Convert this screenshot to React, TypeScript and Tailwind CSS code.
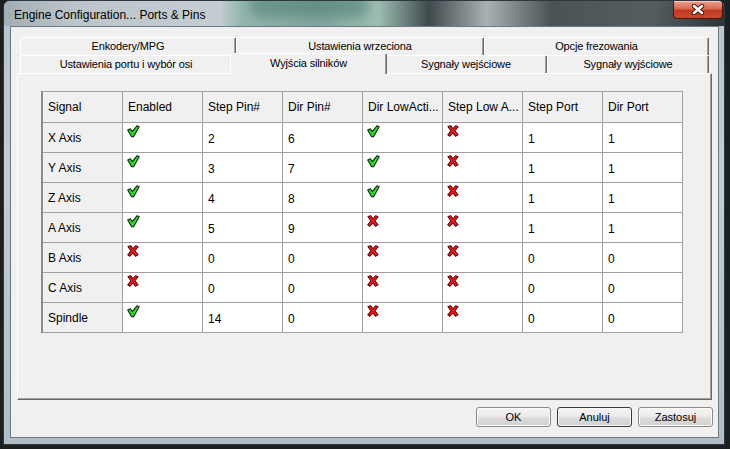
import React from "react";

type Row = [string, boolean, string, string, boolean, boolean, string, string];

const rows: Row[] = [
  ["X Axis", true, "2", "6", true, false, "1", "1"],
  ["Y Axis", true, "3", "7", true, false, "1", "1"],
  ["Z Axis", true, "4", "8", true, false, "1", "1"],
  ["A Axis", true, "5", "9", false, false, "1", "1"],
  ["B Axis", false, "0", "0", false, false, "0", "0"],
  ["C Axis", false, "0", "0", false, false, "0", "0"],
  ["Spindle", true, "14", "0", false, false, "0", "0"],
];

const headers = [
  "Signal",
  "Enabled",
  "Step Pin#",
  "Dir Pin#",
  "Dir LowActi...",
  "Step Low A...",
  "Step Port",
  "Dir Port",
];

function Check() {
  return (
    <svg width="13" height="13" viewBox="0 0 13 13" className="block">
      <polygon
        points="0.7,5 3.4,3.8 5.2,6.6 10.2,0.7 12.2,1.8 6.6,11.8 4.6,11.8"
        fill="#31d531"
        stroke="#0a2d0a"
        strokeWidth="1.1"
        strokeLinejoin="round"
      />
    </svg>
  );
}

function Cross() {
  return (
    <svg width="12" height="12" viewBox="0 0 12 12" className="block">
      <polygon
        points="0.8,1.6 3.8,0.6 6,3.6 8.6,0.6 11.2,1.8 8,5.8 11.2,9.8 8.4,11.4 5.8,8 3,11.4 0.6,10 3.8,5.8"
        fill="#e3161b"
        stroke="#4d0505"
        strokeWidth="1"
        strokeLinejoin="round"
      />
    </svg>
  );
}

function Tab({ label, w }: { label: string; w: string }) {
  return (
    <div
      className={`${w} h-[18px] flex items-center justify-center bg-[#f0f0f0] border-t border-l border-r border-t-white border-l-white border-r-[#696969] rounded-t-[2px] shadow-[inset_-1px_0_0_#a0a0a0] text-[11px] tracking-[-0.15px] text-black`}
    >
      {label}
    </div>
  );
}

function Btn({ label, def }: { label: string; def?: boolean }) {
  return (
    <div
      className={`w-[75px] h-[20px] flex items-center justify-center rounded-[3px] border text-[11px] text-black bg-[linear-gradient(to_bottom,#f4f4f4_0%,#ececec_45%,#dcdcdc_55%,#d0d0d0_100%)] ${
        def
          ? "border-[#3a3a3a] shadow-[inset_0_0_0_1px_#f8f8f8]"
          : "border-[#8a8a8a] shadow-[inset_0_0_0_1px_#fbfbfb]"
      }`}
    >
      {label}
    </div>
  );
}

export default function App() {
  return (
    <div className="w-[730px] h-[449px] bg-[#1d2021] overflow-hidden font-['Liberation_Sans',Arial,sans-serif]">
      <div className="relative ml-[3px] w-[722px] h-[445px] rounded-t-[7px] border border-[#2c3840] bg-[linear-gradient(to_bottom,#b9c3ca_0%,#c3ccd2_40%,#b2bdc5_100%)] flex flex-col">
        {/* title bar */}
        <div className="relative h-[25px] rounded-t-[6px] overflow-hidden bg-[linear-gradient(to_right,#a3aeb4_0%,#bcc6ca_10%,#c4cdd1_30%,#93b5ac_33%,#7fa69c_44%,#9dbdb2_52%,#3f494b_59%,#a9b1b3_67%,#4b5355_76%,#565d5f_90%,#2f3537_100%)]">
          <div className="absolute left-[245px] top-[-6px] w-[120px] h-[22px] rounded-full bg-[#3e6d64] opacity-40 blur-[5px]" />
          <div className="absolute left-[10px] top-[5px] text-[12px] text-black">
            Engine Configuration... Ports &amp; Pins
          </div>
          <div className="absolute right-[1px] top-[-1px] w-[50px] h-[19px] rounded-b-[4px] border border-[#4a140c] bg-[linear-gradient(to_bottom,#eaa08f_0%,#d86a52_45%,#c23a22_55%,#c8492d_100%)] shadow-[inset_0_1px_0_#f6c7bb] flex items-center justify-center">
            <svg width="14" height="11" viewBox="0 0 14 11">
              <path d="M3 2 L11 9 M11 2 L3 9" stroke="#4a1a12" strokeWidth="4.4" strokeLinecap="round" />
              <path d="M3 2 L11 9 M11 2 L3 9" stroke="#ffffff" strokeWidth="2.4" strokeLinecap="round" />
            </svg>
          </div>
        </div>

        {/* client area */}
        <div className="ml-[6px] mr-[5px] h-[412px] border border-[#6c7982] bg-[#f0f0f0] flex flex-col">
          <div className="ml-[6px] mt-[10px] w-[695px] flex flex-col">
            {/* row 1 tabs */}
            <div className="flex pl-[3px]">
              <Tab label="Enkodery/MPG" w="w-[216px]" />
              <Tab label="Ustawienia wrzeciona" w="w-[248px]" />
              <Tab label="Opcje frezowania" w="w-[225px]" />
            </div>
            {/* row 2 tabs */}
            <div className="flex pl-[3px] h-[18px]">
              <Tab label="Ustawienia portu i wybór osi" w="w-[212px]" />
              <div className="relative z-10 -mx-[2px] -mt-[2px] w-[157px] h-[21px] flex items-center justify-center bg-[#f0f0f0] border-t border-l border-r border-t-white border-l-white border-r-[#696969] rounded-t-[2px] shadow-[inset_-1px_0_0_#a0a0a0] text-[11px] tracking-[-0.15px] text-black pb-[1px]">
                Wyjścia silników
              </div>
              <Tab label="Sygnały wejściowe" w="w-[162px]" />
              <Tab label="Sygnały wyjściowe" w="w-[162px]" />
            </div>
            {/* panel */}
            <div className="h-[327px] border border-t-white border-l-white border-r-[#696969] border-b-[#696969] shadow-[inset_-1px_-1px_0_#a0a0a0] bg-[#f0f0f0]">
              <div className="ml-[23px] mt-[17px] w-[642px] border-l-2 border-t border-l-[#8c8c8c] border-t-[#a0a0a0] grid grid-cols-[repeat(8,80px)] text-[12px] text-black">
                {headers.map((h) => (
                  <div
                    key={h}
                    className="h-[31px] bg-[#f0f0f0] border-r border-b border-[#a0a0a0] flex items-center pl-[5px] whitespace-nowrap overflow-hidden"
                  >
                    {h}
                  </div>
                ))}
                {rows.map((r) => (
                  <React.Fragment key={r[0]}>
                    <div className="h-[30px] bg-[#f0f0f0] border-r border-b border-[#a0a0a0] flex items-center pl-[5px]">
                      {r[0]}
                    </div>
                    <div className="h-[30px] bg-white border-r border-b border-[#a0a0a0] pl-[4px] pt-[2px]">
                      {r[1] ? <Check /> : <Cross />}
                    </div>
                    <div className="h-[30px] bg-white border-r border-b border-[#a0a0a0] flex items-center pl-[5px] pt-[2px]">
                      {r[2]}
                    </div>
                    <div className="h-[30px] bg-white border-r border-b border-[#a0a0a0] flex items-center pl-[5px] pt-[2px]">
                      {r[3]}
                    </div>
                    <div className="h-[30px] bg-white border-r border-b border-[#a0a0a0] pl-[4px] pt-[2px]">
                      {r[4] ? <Check /> : <Cross />}
                    </div>
                    <div className="h-[30px] bg-white border-r border-b border-[#a0a0a0] pl-[4px] pt-[2px]">
                      {r[5] ? <Check /> : <Cross />}
                    </div>
                    <div className="h-[30px] bg-white border-r border-b border-[#a0a0a0] flex items-center pl-[5px] pt-[2px]">
                      {r[6]}
                    </div>
                    <div className="h-[30px] bg-white border-r border-b border-[#a0a0a0] flex items-center pl-[5px] pt-[2px]">
                      {r[7]}
                    </div>
                  </React.Fragment>
                ))}
              </div>
            </div>
          </div>
          {/* buttons */}
          <div className="mt-[7px] flex justify-end gap-[6px] pr-[5px]">
            <Btn label="OK" />
            <Btn label="Anuluj" def />
            <Btn label="Zastosuj" />
          </div>
        </div>
      </div>
    </div>
  );
}
